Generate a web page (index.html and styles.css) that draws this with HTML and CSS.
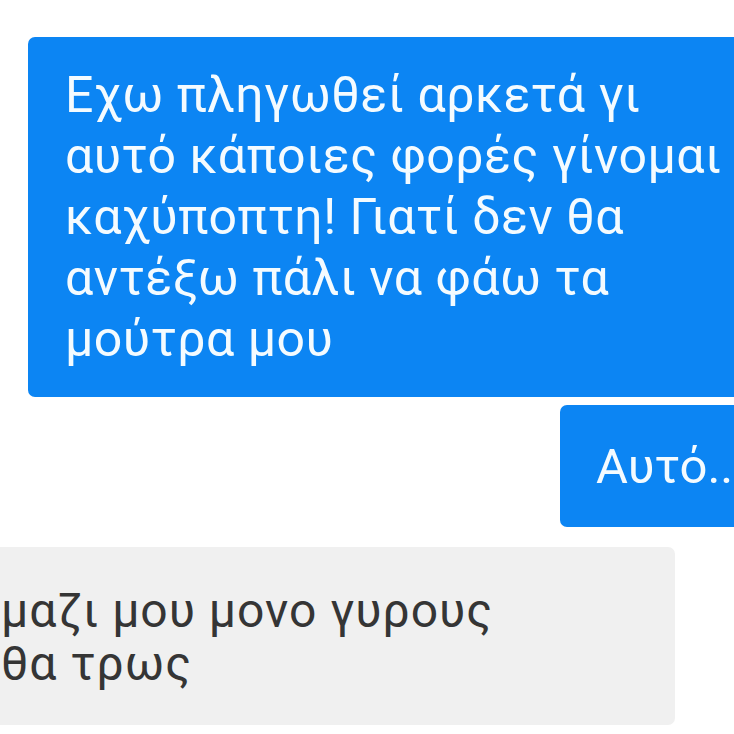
FILE: index.html
```html
<!DOCTYPE html>
<html lang="el">
<head>
    <meta charset="UTF-8">
    <meta name="viewport" content="width=device-width, initial-scale=1.0">
    <title>Chat</title>
    <link rel="stylesheet" href="styles.css">
</head>
<body>
    <div class="chat">
        <div class="bubble sent long">
            Εχω πληγωθεί αρκετά γι<br>
            αυτό κάποιες φορές γίνομαι<br>
            καχύποπτη! Γιατί δεν θα<br>
            αντέξω πάλι να φάω τα<br>
            μούτρα μου
        </div>
        <div class="bubble sent short">Αυτό..</div>
        <div class="bubble received">
            μαζι μου μονο γυρους<br>
            θα τρως
        </div>
    </div>
</html>
```

FILE: styles.css
```css
body {
    font-family: Roboto, "Noto Sans", sans-serif;
    background-color: #fff;
    margin: 0;
    overflow: hidden;
}
.chat {
    display: flex;
    flex-direction: column;
    width: 734px;
    height: 734px;
    overflow: hidden;
}
.bubble {
    border-radius: 7px;
    white-space: nowrap;
}
.sent {
    background-color: #0c85f3;
    color: #f4fbff;
    font-size: 50px;
    letter-spacing: 0.5px;
}
.long {
    margin: 37px -30px 0 28px;
    height: 360px;
    box-sizing: border-box;
    padding: 28px 0 0 37px;
    line-height: 61px;
}
.short {
    align-self: flex-start;
    margin: 8px 0 0 560px;
    width: 210px;
    height: 122px;
    box-sizing: border-box;
    padding: 31px 0 0 36px;
    line-height: 61px;
    font-size: 49px;
    letter-spacing: 0;
}
.received {
    background-color: #f0f0f0;
    color: #353535;
    font-size: 48px;
    letter-spacing: 1px;
    line-height: 53px;
    margin: 20px 0 0 -10px;
    width: 685px;
    height: 178px;
    box-sizing: border-box;
    padding: 37px 0 0 11px;
}
```
